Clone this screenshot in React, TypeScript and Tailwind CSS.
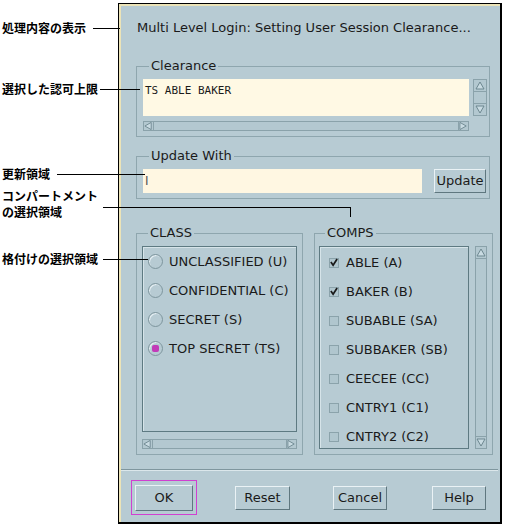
import React from 'react';

const bg = 'bg-[#b7cbd3]';

function Tri({ dir, className = '' }: { dir: 'up' | 'down' | 'left' | 'right'; className?: string }) {
  const pts: Record<string, string> = {
    up: '1,8 5,1 9,8',
    down: '1,1 5,8 9,1',
    left: '8,1 1,5 8,9',
    right: '1,1 8,5 1,9',
  };
  return (
    <svg width="10" height="10" viewBox="0 0 10 10" className={className}>
      <polygon points={pts[dir]} fill="#c9dbe2" stroke="#6d8790" strokeWidth="1" />
    </svg>
  );
}

function HScroll({ width }: { width: number }) {
  return (
    <div className="flex h-[10px] border border-[#8aa2aa] bg-[#b3c8d0]" style={{ width }}>
      <div className="w-[10px] h-full border-r border-[#8aa2aa] flex items-center justify-center">
        <Tri dir="left" />
      </div>
      <div className="flex-1" />
      <div className="w-[10px] h-full border-l border-[#8aa2aa] flex items-center justify-center">
        <Tri dir="right" />
      </div>
    </div>
  );
}

function VScroll({ className = '' }: { className?: string }) {
  return (
    <div className={`flex flex-col border border-[#8aa2aa] bg-[#b3c8d0] ${className}`}>
      <div className="h-[12px] border-b border-[#8aa2aa] flex items-center justify-center">
        <Tri dir="up" />
      </div>
      <div className="flex-1" />
      <div className="h-[12px] border-t border-[#8aa2aa] flex items-center justify-center">
        <Tri dir="down" />
      </div>
    </div>
  );
}

function Group({ title, className = '', children }: { title: string; className?: string; children: React.ReactNode }) {
  return (
    <fieldset className={`border border-[#8ea6ae] ${className}`}>
      <legend className="ml-[6px] px-[2px] text-[13px] leading-[14px] text-[#1a1a1a]">{title}</legend>
      {children}
    </fieldset>
  );
}

function Button({ label, className = '' }: { label: string; className?: string }) {
  return (
    <div
      className={`h-[24px] flex items-center justify-center text-[13px] text-[#1a1a1a] border border-t-[#eaf2f5] border-l-[#eaf2f5] border-b-[#5f777f] border-r-[#5f777f] ${bg} ${className}`}
    >
      {label}
    </div>
  );
}

const classes = ['UNCLASSIFIED (U)', 'CONFIDENTIAL (C)', 'SECRET (S)', 'TOP SECRET (TS)'];
const comps = [
  { t: 'ABLE (A)', c: true },
  { t: 'BAKER (B)', c: true },
  { t: 'SUBABLE (SA)', c: false },
  { t: 'SUBBAKER (SB)', c: false },
  { t: 'CEECEE (CC)', c: false },
  { t: 'CNTRY1 (C1)', c: false },
  { t: 'CNTRY2 (C2)', c: false },
];

export default function App() {
  return (
    <div className="relative w-[505px] h-[526px] bg-white flex overflow-hidden font-['DejaVu_Sans',sans-serif]">
      {/* callout labels */}
      <div className="w-[118px] shrink-0 pl-[2px] pt-[20px] text-[12px] leading-[16px] font-bold text-black font-['Noto_Sans_CJK_JP',sans-serif]">
        <div>処理内容の表示</div>
        <div className="mt-[45px]">選択した認可上限</div>
        <div className="mt-[69px]">更新領域</div>
        <div className="mt-[6px]">
          コンパートメント
          <br />
          の選択領域
        </div>
        <div className="mt-[31px]">格付けの選択領域</div>
      </div>

      {/* dialog */}
      <div className={`mt-[3px] w-[384px] h-[521px] border-l border-t border-b-2 border-r-2 border-black ${bg} shadow-[inset_2px_2px_0_#ece4b8] flex flex-col`}>
        <div className="pl-[17px] pr-[10px] pt-[17px]">
          <div className="pl-px text-[13px] leading-[14px] text-[#1a1a1a] whitespace-nowrap">
            Multi Level Login: Setting User Session Clearance...
          </div>

          <Group title="Clearance" className="mt-[24px] px-[6px] pr-[2px] pb-[5px] w-[354px]">
            <div className="mt-[6px] flex gap-[4px]">
              <div className="w-[326px] h-[37px] bg-[#fff9e4] pl-[2px] pt-[5px] text-[11px] leading-[14px] font-['DejaVu_Sans_Mono',monospace] text-[#1a1a1a]">
                TS ABLE BAKER
              </div>
              <VScroll className="w-[14px]" />
            </div>
            <div className="mt-[5px]">
              <HScroll width={326} />
            </div>
          </Group>

          <Group title="Update With" className="mt-[12px] px-[6px] pr-[3px] pb-[5px] w-[354px]">
            <div className="mt-[6px] flex gap-[12px]">
              <div className="w-[279px] h-[24px] bg-[#fff7e2] flex items-center pl-[2px]">
                <span className="text-[12px] text-[#555]">I</span>
              </div>
              <Button label="Update" className="w-[52px]" />
            </div>
          </Group>

          <div className="mt-[27px] flex gap-[11px]">
            <Group title="CLASS" className="w-[165px] px-[5px] pb-[5px]">
              <div className="mt-[6px] w-[155px] h-[186px] border border-[#5e7a82] shadow-[inset_1px_1px_0_#d6e4e9] pl-[5px]">
                {classes.map((c, i) => (
                  <div key={c} className="h-[29px] flex items-center gap-[6px] text-[13px] text-[#1a1a1a] whitespace-nowrap">
                    <span className="shrink-0 w-[15px] h-[15px] rounded-full border border-[#7d959d] shadow-[inset_1px_1px_0_#e4eef2] flex items-center justify-center">
                      {i === 3 && <span className="w-[7px] h-[7px] rounded-[2px] bg-[#c23ab8]" />}
                    </span>
                    {c}
                  </div>
                ))}
              </div>
              <div className="mt-[7px]">
                <HScroll width={155} />
              </div>
            </Group>

            <Group title="COMPS" className="w-[178px] pl-[4px] pr-[5px] pb-[4px]">
              <div className="mt-[6px] flex gap-[6px]">
                <div className="w-[150px] h-[203px] border border-[#5e7a82] shadow-[inset_1px_1px_0_#d6e4e9] pt-[1px] pl-[9px]">
                  {comps.map((c) => (
                    <div key={c.t} className="h-[29px] flex items-center gap-[7px] text-[13px] text-[#1a1a1a] whitespace-nowrap">
                      <span className="shrink-0 w-[10px] h-[10px] border border-[#8ba3ab] bg-[#b0c6ce] flex items-center justify-center">
                        {c.c && (
                          <svg width="9" height="9" viewBox="0 0 9 9">
                            <path d="M1 4 L3.5 7.5 L8 0.5" fill="none" stroke="#1a1a1a" strokeWidth="2" />
                          </svg>
                        )}
                      </span>
                      {c.t}
                    </div>
                  ))}
                </div>
                <VScroll className="w-[12px] h-[203px]" />
              </div>
            </Group>
          </div>
        </div>

        <div className="mt-[14px] h-[2px] border-t border-[#7f969e] border-b border-b-[#dbe7eb] mx-[2px]" />

        <div className="mt-[9px] flex items-center pl-[12px]">
          <div className="w-[66px] h-[35px] border border-[#d040d0] flex items-center justify-center">
            <Button label="OK" className="w-[58px] h-[26px]" />
          </div>
          <Button label="Reset" className="ml-[38px] w-[55px]" />
          <Button label="Cancel" className="ml-[43px] w-[54px]" />
          <Button label="Help" className="ml-[45px] w-[54px]" />
        </div>
      </div>

      {/* callout lines */}
      <div className="absolute left-[93px] top-[28px] w-[27px] h-px bg-black" />
      <div className="absolute left-[100px] top-[89px] w-[40px] h-px bg-black" />
      <div className="absolute left-[57px] top-[174px] w-[88px] h-px bg-black" />
      <div className="absolute left-[103px] top-[207px] w-[248px] h-px bg-black" />
      <div className="absolute left-[350px] top-[207px] w-px h-[10px] bg-black" />
      <div className="absolute left-[103px] top-[259px] w-[45px] h-px bg-black" />
    </div>
  );
}
